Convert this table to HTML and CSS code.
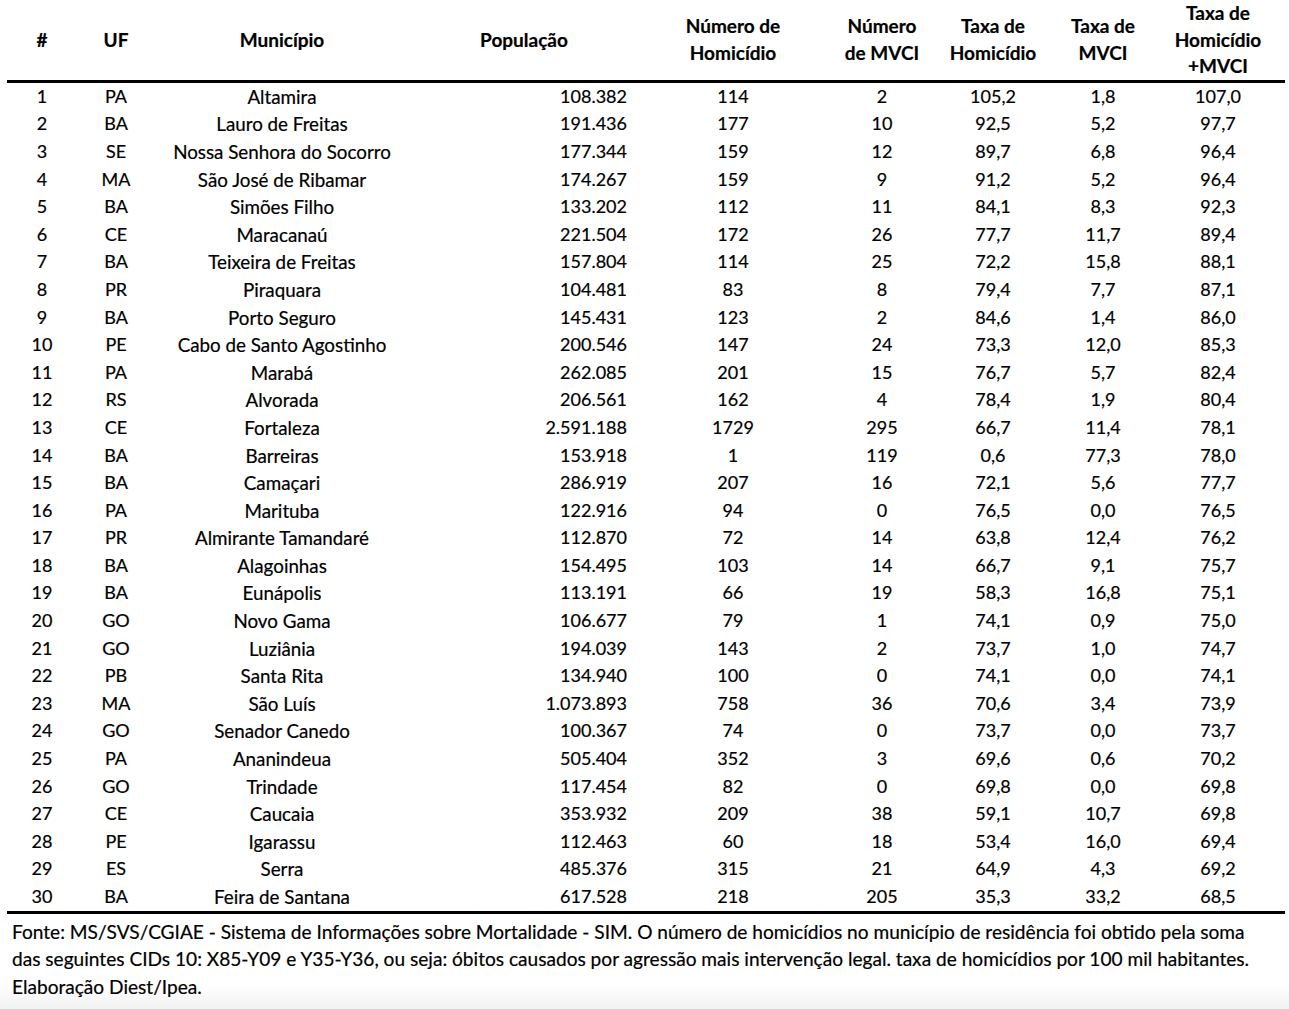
FILE: index.html
```html
<!DOCTYPE html>
<html lang="pt">
<head>
<meta charset="utf-8">
<title>Taxa de Homicídio + MVCI</title>
<link rel="stylesheet" href="styles.css">
</head>
<body>
<div class="page">
<table class="data">
<colgroup>
<col class="c-num"><col class="c-uf"><col class="c-mun"><col class="c-pop"><col class="c-hom"><col class="c-mvci"><col class="c-th"><col class="c-tm"><col class="c-tt">
</colgroup>
<thead>
<tr>
<th>#</th><th>UF</th><th>Município</th><th>População</th><th>Número de<br>Homicídio</th><th>Número<br>de MVCI</th><th>Taxa de<br>Homicídio</th><th>Taxa de<br>MVCI</th><th>Taxa de<br>Homicídio<br>+MVCI</th>
</tr>
</thead>
<tbody>
<tr><td>1</td><td>PA</td><td>Altamira</td><td class="r">108.382</td><td>114</td><td>2</td><td>105,2</td><td>1,8</td><td>107,0</td></tr>
<tr><td>2</td><td>BA</td><td>Lauro de Freitas</td><td class="r">191.436</td><td>177</td><td>10</td><td>92,5</td><td>5,2</td><td>97,7</td></tr>
<tr><td>3</td><td>SE</td><td>Nossa Senhora do Socorro</td><td class="r">177.344</td><td>159</td><td>12</td><td>89,7</td><td>6,8</td><td>96,4</td></tr>
<tr><td>4</td><td>MA</td><td>São José de Ribamar</td><td class="r">174.267</td><td>159</td><td>9</td><td>91,2</td><td>5,2</td><td>96,4</td></tr>
<tr><td>5</td><td>BA</td><td>Simões Filho</td><td class="r">133.202</td><td>112</td><td>11</td><td>84,1</td><td>8,3</td><td>92,3</td></tr>
<tr><td>6</td><td>CE</td><td>Maracanaú</td><td class="r">221.504</td><td>172</td><td>26</td><td>77,7</td><td>11,7</td><td>89,4</td></tr>
<tr><td>7</td><td>BA</td><td>Teixeira de Freitas</td><td class="r">157.804</td><td>114</td><td>25</td><td>72,2</td><td>15,8</td><td>88,1</td></tr>
<tr><td>8</td><td>PR</td><td>Piraquara</td><td class="r">104.481</td><td>83</td><td>8</td><td>79,4</td><td>7,7</td><td>87,1</td></tr>
<tr><td>9</td><td>BA</td><td>Porto Seguro</td><td class="r">145.431</td><td>123</td><td>2</td><td>84,6</td><td>1,4</td><td>86,0</td></tr>
<tr><td>10</td><td>PE</td><td>Cabo de Santo Agostinho</td><td class="r">200.546</td><td>147</td><td>24</td><td>73,3</td><td>12,0</td><td>85,3</td></tr>
<tr><td>11</td><td>PA</td><td>Marabá</td><td class="r">262.085</td><td>201</td><td>15</td><td>76,7</td><td>5,7</td><td>82,4</td></tr>
<tr><td>12</td><td>RS</td><td>Alvorada</td><td class="r">206.561</td><td>162</td><td>4</td><td>78,4</td><td>1,9</td><td>80,4</td></tr>
<tr><td>13</td><td>CE</td><td>Fortaleza</td><td class="r">2.591.188</td><td>1729</td><td>295</td><td>66,7</td><td>11,4</td><td>78,1</td></tr>
<tr><td>14</td><td>BA</td><td>Barreiras</td><td class="r">153.918</td><td>1</td><td>119</td><td>0,6</td><td>77,3</td><td>78,0</td></tr>
<tr><td>15</td><td>BA</td><td>Camaçari</td><td class="r">286.919</td><td>207</td><td>16</td><td>72,1</td><td>5,6</td><td>77,7</td></tr>
<tr><td>16</td><td>PA</td><td>Marituba</td><td class="r">122.916</td><td>94</td><td>0</td><td>76,5</td><td>0,0</td><td>76,5</td></tr>
<tr><td>17</td><td>PR</td><td>Almirante Tamandaré</td><td class="r">112.870</td><td>72</td><td>14</td><td>63,8</td><td>12,4</td><td>76,2</td></tr>
<tr><td>18</td><td>BA</td><td>Alagoinhas</td><td class="r">154.495</td><td>103</td><td>14</td><td>66,7</td><td>9,1</td><td>75,7</td></tr>
<tr><td>19</td><td>BA</td><td>Eunápolis</td><td class="r">113.191</td><td>66</td><td>19</td><td>58,3</td><td>16,8</td><td>75,1</td></tr>
<tr><td>20</td><td>GO</td><td>Novo Gama</td><td class="r">106.677</td><td>79</td><td>1</td><td>74,1</td><td>0,9</td><td>75,0</td></tr>
<tr><td>21</td><td>GO</td><td>Luziânia</td><td class="r">194.039</td><td>143</td><td>2</td><td>73,7</td><td>1,0</td><td>74,7</td></tr>
<tr><td>22</td><td>PB</td><td>Santa Rita</td><td class="r">134.940</td><td>100</td><td>0</td><td>74,1</td><td>0,0</td><td>74,1</td></tr>
<tr><td>23</td><td>MA</td><td>São Luís</td><td class="r">1.073.893</td><td>758</td><td>36</td><td>70,6</td><td>3,4</td><td>73,9</td></tr>
<tr><td>24</td><td>GO</td><td>Senador Canedo</td><td class="r">100.367</td><td>74</td><td>0</td><td>73,7</td><td>0,0</td><td>73,7</td></tr>
<tr><td>25</td><td>PA</td><td>Ananindeua</td><td class="r">505.404</td><td>352</td><td>3</td><td>69,6</td><td>0,6</td><td>70,2</td></tr>
<tr><td>26</td><td>GO</td><td>Trindade</td><td class="r">117.454</td><td>82</td><td>0</td><td>69,8</td><td>0,0</td><td>69,8</td></tr>
<tr><td>27</td><td>CE</td><td>Caucaia</td><td class="r">353.932</td><td>209</td><td>38</td><td>59,1</td><td>10,7</td><td>69,8</td></tr>
<tr><td>28</td><td>PE</td><td>Igarassu</td><td class="r">112.463</td><td>60</td><td>18</td><td>53,4</td><td>16,0</td><td>69,4</td></tr>
<tr><td>29</td><td>ES</td><td>Serra</td><td class="r">485.376</td><td>315</td><td>21</td><td>64,9</td><td>4,3</td><td>69,2</td></tr>
<tr><td>30</td><td>BA</td><td>Feira de Santana</td><td class="r">617.528</td><td>218</td><td>205</td><td>35,3</td><td>33,2</td><td>68,5</td></tr>
</tbody>
</table>
<p class="note">Fonte: MS/SVS/CGIAE - Sistema de Informações sobre Mortalidade - SIM. O número de homicídios no município de residência foi obtido pela soma<br>das seguintes CIDs 10: X85-Y09 e Y35-Y36, ou seja: óbitos causados por agressão mais intervenção legal. taxa de homicídios por 100 mil habitantes.<br>Elaboração Diest/Ipea.</p>
</div>
</body>
</html>
```
FILE: styles.css
```css
html, body {
  margin: 0;
  padding: 0;
  background: #fff;
}
body {
  width: 1289px;
  height: 1009px;
  overflow: hidden;
  font-family: Lato, "Open Sans", sans-serif;
  font-size: 18px;
  color: #000;
  -webkit-text-stroke: 0.2px #000;
  background: linear-gradient(to bottom, #fff 0, #fff 985px, #f2f2f2 1009px);
}
.page {
  padding: 0 4px 0 7px;
}
.data {
  width: 1278px;
  border-collapse: collapse;
  table-layout: fixed;
}
.c-num { width: 70px; }
.c-uf { width: 78px; }
.c-mun { width: 254px; }
.c-pop { width: 230px; }
.c-hom { width: 188px; }
.c-mvci { width: 110px; }
.c-th { width: 112px; }
.c-tm { width: 108px; }
.c-tt { width: 128px; }
.data th {
  font-weight: 700;
  font-size: 19px;
  height: 78px;
  padding: 0;
  line-height: 26.6px;
  text-align: center;
  vertical-align: middle;
  border-bottom: 3px solid #000;
}
.data th:last-child { padding-right: 6px; }
.data td {
  height: 27.6px;
  padding: 0;
  line-height: 27.6px;
  text-align: center;
  white-space: nowrap;
}
.data td:nth-child(3) { font-size: 18.8px; }
.data td:last-child { padding-right: 6px; }
.data td.r {
  text-align: right;
  padding-right: 12px;
}
.data tbody tr:last-child td {
  border-bottom: 3px solid #000;
}
.note {
  margin: 4px 0 0 5px;
  font-size: 19.1px;
  line-height: 27.5px;
  white-space: nowrap;
}
```
